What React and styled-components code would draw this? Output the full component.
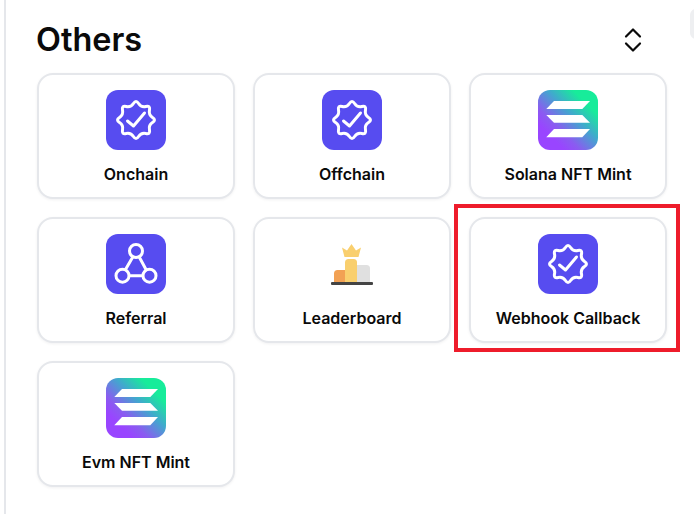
import React from 'react';
import styled, { createGlobalStyle } from 'styled-components';

const GlobalStyle = createGlobalStyle`
    html, body {
        margin: 0;
        padding: 0;
        height: 100%;
        background: #fff;
        overflow: hidden;
    }
    body {
        font-family: Inter, "Liberation Sans", sans-serif;
        color: #0a0a0a;
    }
`;

const Page = styled.div`
    position: relative;
    width: 694px;
    height: 514px;
    box-sizing: border-box;
    padding-left: 4px;
`;
const Panel = styled.section`
    height: 100%;
    box-sizing: border-box;
    border-left: 2px solid #e5e7eb;
    padding: 21px 27px 0 31px;
`;
const SideHandle = styled.div`
    position: absolute;
    top: 9px;
    right: -10px;
    width: 14px;
    height: 30px;
    border-radius: 6px;
    background: #eeeff1;
`;
const Header = styled.header`
    display: flex;
    align-items: center;
    justify-content: space-between;
    height: 38px;
    margin-bottom: 14px;
`;
const Title = styled.h2`
    margin: 0 0 0 -1px;
    font-size: 32.4px;
    font-weight: 600;
    line-height: 38px;
`;
const Toggle = styled.button`
    display: flex;
    padding: 0;
    margin-right: 25px;
    border: 0;
    background: none;
    color: #0a0a0a;
`;
const Grid = styled.div`
    display: grid;
    grid-template-columns: repeat(3, 198px);
    grid-auto-rows: 126px;
    gap: 18px;
`;
const Card = styled.div`
    position: relative;
    display: flex;
    flex-direction: column;
    align-items: center;
    box-sizing: border-box;
    padding-top: 15px;
    border: 2px solid #e5e7eb;
    border-radius: 16px;
    background: #fff;
    box-shadow: 0 1px 3px rgba(17, 24, 39, 0.06);
`;
const Highlight = styled.div`
    position: absolute;
    inset: -15px -15px -11px -17px;
    border: 4px solid #ee1c2b;
    pointer-events: none;
`;
const IconTile = styled.div`
    display: flex;
    align-items: center;
    justify-content: center;
    width: 60px;
    height: 60px;
    border-radius: 12px;
    overflow: hidden;
    background: ${(props) => props.$bg || 'transparent'};
`;
const Label = styled.div`
    margin-top: 13px;
    font-size: 16px;
    font-weight: 600;
    line-height: 22px;
`;

// eight lobed badge: smooth curve through the midpoints of a star
const badgePath = () => {
    const pts = [];
    for (let i = 0; i < 16; i++) {
        const a = (i * Math.PI) / 8 - Math.PI / 2;
        const r = i % 2 === 0 ? 20.5 : 13.5;
        pts.push([30 + r * Math.cos(a), 30 + r * Math.sin(a)]);
    }
    const mid = (p, q) => [(p[0] + q[0]) / 2, (p[1] + q[1]) / 2];
    const f = (v) => v.toFixed(2);
    const start = mid(pts[15], pts[0]);
    let d = `M${f(start[0])} ${f(start[1])}`;
    pts.forEach((p, i) => {
        const m = mid(p, pts[(i + 1) % 16]);
        d += `Q${f(p[0])} ${f(p[1])} ${f(m[0])} ${f(m[1])}`;
    });
    return d + 'Z';
};

const BadgeIcon = () => (
    <svg width="60" height="60" viewBox="0 0 60 60" fill="none" stroke="#fff" strokeWidth="3" strokeLinejoin="round" strokeLinecap="round">
        <path d={badgePath()} />
        <path d="M21.5 31l6 5L38.5 23" />
    </svg>
);

const ReferralIcon = () => (
    <svg width="60" height="60" viewBox="0 0 60 60" fill="none" stroke="#fff" strokeWidth="3">
        <path d="M26.5 23.5L19.5 35.5M33.5 23.5L40 35.5M23.5 41.7H36.5" />
        <circle cx="30" cy="17" r="6.5" />
        <circle cx="16.5" cy="41.7" r="6.5" />
        <circle cx="43.5" cy="41.7" r="6.5" />
    </svg>
);

const SolanaIcon = () => (
    <svg width="60" height="60" viewBox="0 0 60 60">
        <defs>
            <linearGradient id="solana" x1="8" y1="52" x2="52" y2="8" gradientUnits="userSpaceOnUse">
                <stop offset="0.12" stopColor="#9945ff" />
                <stop offset="0.3" stopColor="#8a5cf0" />
                <stop offset="0.6" stopColor="#43a6cf" />
                <stop offset="0.9" stopColor="#17ec9a" />
            </linearGradient>
        </defs>
        <rect width="60" height="60" fill="url(#solana)" />
        <path fill="#fff" d="M16 11H52L44.3 19H8.3Z" />
        <path fill="#fff" d="M8.3 25H44.3L52 32.7H16Z" />
        <path fill="#fff" d="M16 39H52L44.3 47.3H8.3Z" />
    </svg>
);

const LeaderboardIcon = () => (
    <svg width="60" height="60" viewBox="0 0 60 60">
        <path fill="#f2a154" d="M12 48V39.5Q12 36 15.5 36H24V48Z" />
        <path fill="#e0e0e0" d="M35 48V31H44.5Q48 31 48 34.5V48Z" />
        <path fill="#f9cf6e" d="M23 48V28.5Q23 25 26.5 25H31.5Q35 25 35 28.5V48Z" />
        <path fill="#f9cf6e" d="M22.5 23L20 13.5L25 16.5L29.5 10L34 16.5L39 13.5L36.5 23Z" />
        <rect x="9" y="48" width="42" height="3" rx="1" fill="#444" />
    </svg>
);

const ChevronsIcon = () => (
    <svg width="18" height="26" viewBox="0 0 18 26" fill="none" stroke="currentColor" strokeWidth="2.2" strokeLinecap="round" strokeLinejoin="round">
        <path d="M2 9.5L9 2.5L16 9.5" />
        <path d="M2 16.5L9 23.5L16 16.5" />
    </svg>
);

const items = [
    { name: 'Onchain', kind: 'badge' },
    { name: 'Offchain', kind: 'badge' },
    { name: 'Solana NFT Mint', kind: 'solana' },
    { name: 'Referral', kind: 'referral' },
    { name: 'Leaderboard', kind: 'leaderboard' },
    { name: 'Webhook Callback', kind: 'badge', selected: true },
    { name: 'Evm NFT Mint', kind: 'solana' },
];

const renderIcon = (kind) => {
    if (kind === 'badge') return <IconTile $bg="#574cf0"><BadgeIcon /></IconTile>;
    if (kind === 'referral') return <IconTile $bg="#574cf0"><ReferralIcon /></IconTile>;
    if (kind === 'solana') return <IconTile><SolanaIcon /></IconTile>;
    return <IconTile><LeaderboardIcon /></IconTile>;
};

const App = () => (
    <Page>
        <GlobalStyle />
        <Panel>
            <Header>
                <Title>Others</Title>
                <Toggle aria-label="Collapse"><ChevronsIcon /></Toggle>
            </Header>
            <Grid>
                {items.map((item) => (
                    <Card key={item.name}>
                        {renderIcon(item.kind)}
                        <Label>{item.name}</Label>
                        {item.selected && <Highlight />}
                    </Card>
                ))}
            </Grid>
        </Panel>
        <SideHandle />
    </Page>
);

export default App;
